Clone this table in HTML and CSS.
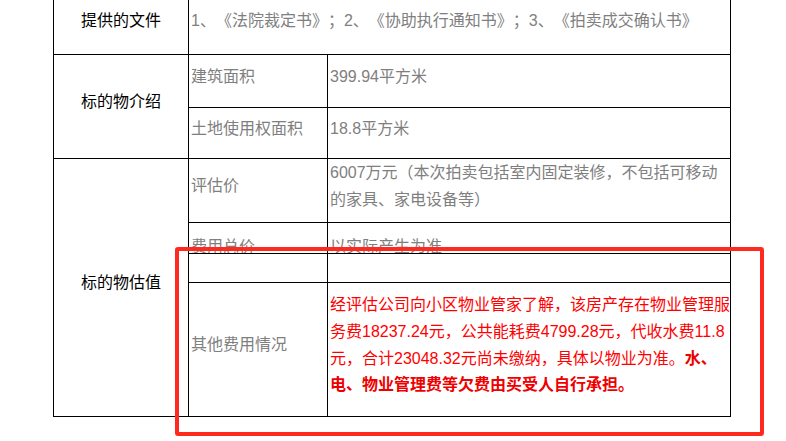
FILE: index.html
```html
<!DOCTYPE html>
<html lang="zh-CN">
<head>
    <meta charset="UTF-8">
    <meta name="viewport" content="width=device-width, initial-scale=1.0">
    <title>标的物信息</title>
    <link rel="stylesheet" href="styles.css">
</head>
<body>
    <div class="page">
        <table class="info-table">
            <colgroup>
                <col class="col-label">
                <col class="col-name">
                <col class="col-value">
            </colgroup>
            <tr class="row-files">
                <td class="label">提供的文件</td>
                <td colspan="2">1、《法院裁定书》；2、《协助执行通知书》；3、《拍卖成交确认书》</td>
            </tr>
            <tr class="row-area">
                <td class="label" rowspan="2">标的物介绍</td>
                <td>建筑面积</td>
                <td>399.94平方米</td>
            </tr>
            <tr class="row-land">
                <td>土地使用权面积</td>
                <td>18.8平方米</td>
            </tr>
            <tr class="row-price">
                <td class="label" rowspan="4">标的物估值</td>
                <td>评估价</td>
                <td>6007万元（本次拍卖包括室内固定装修，不包括可移动的家具、家电设备等）</td>
            </tr>
            <tr class="row-total">
                <td><div class="clip">费用总价</div></td>
                <td><div class="clip">以实际产生为准</div></td>
            </tr>
            <tr class="row-empty">
                <td></td>
                <td></td>
            </tr>
            <tr class="row-other">
                <td>其他费用情况</td>
                <td class="warn">经评估公司向小区物业管家了解，该房产存在物业管理服务费18237.24元，公共能耗费4799.28元，代收水费11.8元，合计23048.32元尚未缴纳，具体以物业为准。<strong>水、电、物业管理费等欠费由买受人自行承担。</strong></td>
            </tr>
        </table>
        <div class="mark"></div>
    </div>
</body>
</html>
```

FILE: styles.css
```css
body {
    margin: 0;
    background-color: #fff;
    font-family: "Liberation Sans", "Noto Sans CJK SC", sans-serif;
    font-size: 16px;
    text-spacing-trim: space-all;
    overflow: hidden;
}
.page {
    position: relative;
    height: 441px;
}
.info-table {
    margin: -4px 0 0 53px;
    border-collapse: collapse;
    table-layout: fixed;
    width: 678px;
}
.col-label {
    width: 135px;
}
.col-name {
    width: 139px;
}
.info-table td {
    border: 1px solid #000;
    padding: 0 2px 8px 2px;
    vertical-align: middle;
    color: #7f7f7f;
    line-height: 26.7px;
    box-sizing: border-box;
}
.info-table td.label {
    color: #000;
    text-align: center;
}
.row-files td {
    height: 58px;
}
.row-area td {
    height: 53px;
}
.row-land td {
    height: 51px;
}
.row-price td {
    height: 64px;
}
.row-total td {
    height: 31px;
    padding: 0 2px;
    vertical-align: top;
}
.clip {
    height: 30px;
    padding-top: 11px;
    box-sizing: border-box;
    overflow: hidden;
}
.row-empty td {
    height: 29px;
}
.row-other td {
    height: 134px;
}
.info-table td.warn {
    color: #f00;
    padding-right: 0;
}
.warn strong {
    color: #e00;
}
.mark {
    position: absolute;
    left: 175px;
    top: 251px;
    width: 581px;
    height: 181px;
    border: 4px solid #ff2a1f;
    border-radius: 3px;
}
```
